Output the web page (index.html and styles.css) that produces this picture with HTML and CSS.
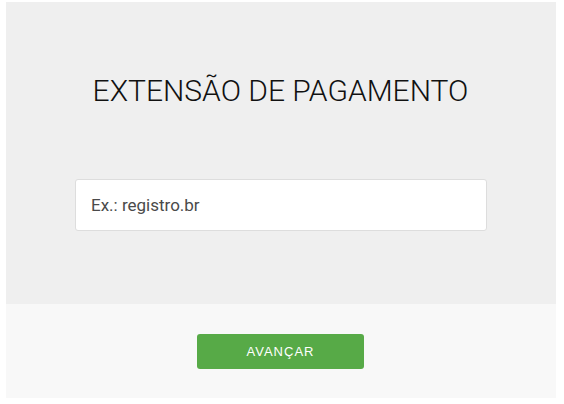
FILE: index.html
```html
<!DOCTYPE html>
<html lang="pt-BR">
<head>
  <meta charset="UTF-8">
  <title>Extensão de Pagamento</title>
  <link rel="stylesheet" href="styles.css">
</head>
<body>

<div class="panel">
  <div class="panel-body">
    <h1 class="title">EXTENSÃO DE PAGAMENTO</h1>
    <input type="text" class="domain-input" placeholder="Ex.: registro.br">
  </div>
  <div class="panel-footer">
    <button class="btn-next">AVANÇAR</button>
  </div>
</div>

</body>
</html>
```

FILE: styles.css
```css
body {
  margin: 2px 8px 0 6px;
  font-family: Roboto, 'Liberation Sans', sans-serif;
  background-color: #ffffff;
}
.panel {
  width: 550px;
}
.panel-body {
  background-color: #efefef; /* Light grey */
  height: 302px;
  padding-top: 1px;
  box-sizing: border-box;
  display: flex;
  flex-direction: column;
  align-items: center;
}
.title {
  font-size: 30px;
  font-weight: 300;
  color: #111111;
  margin: 70px 0 0 -1px;
  line-height: 36px;
}
.domain-input {
  margin-top: 70px;
  width: 412px;
  height: 52px;
  box-sizing: border-box;
  border: 1px solid #dddddd;
  border-radius: 3px;
  background-color: #ffffff;
  padding: 0 15px;
  font-family: Roboto, 'Liberation Sans', sans-serif;
  font-size: 17px;
  color: #333333;
}
.domain-input::placeholder {
  color: #4a4a4a;
}
.panel-footer {
  background-color: #f8f8f8; /* Lighter grey */
  height: 94px;
  display: flex;
  justify-content: center;
  align-items: center;
}
.btn-next {
  width: 167px;
  height: 35px;
  margin: 1px 0 0 -1px;
  background-color: #57aa47; /* Green */
  color: #ffffff;
  border: none;
  border-radius: 3px;
  font-family: 'Liberation Sans', Arial, sans-serif;
  font-size: 13px;
  letter-spacing: 1px;
  cursor: pointer;
}
```
